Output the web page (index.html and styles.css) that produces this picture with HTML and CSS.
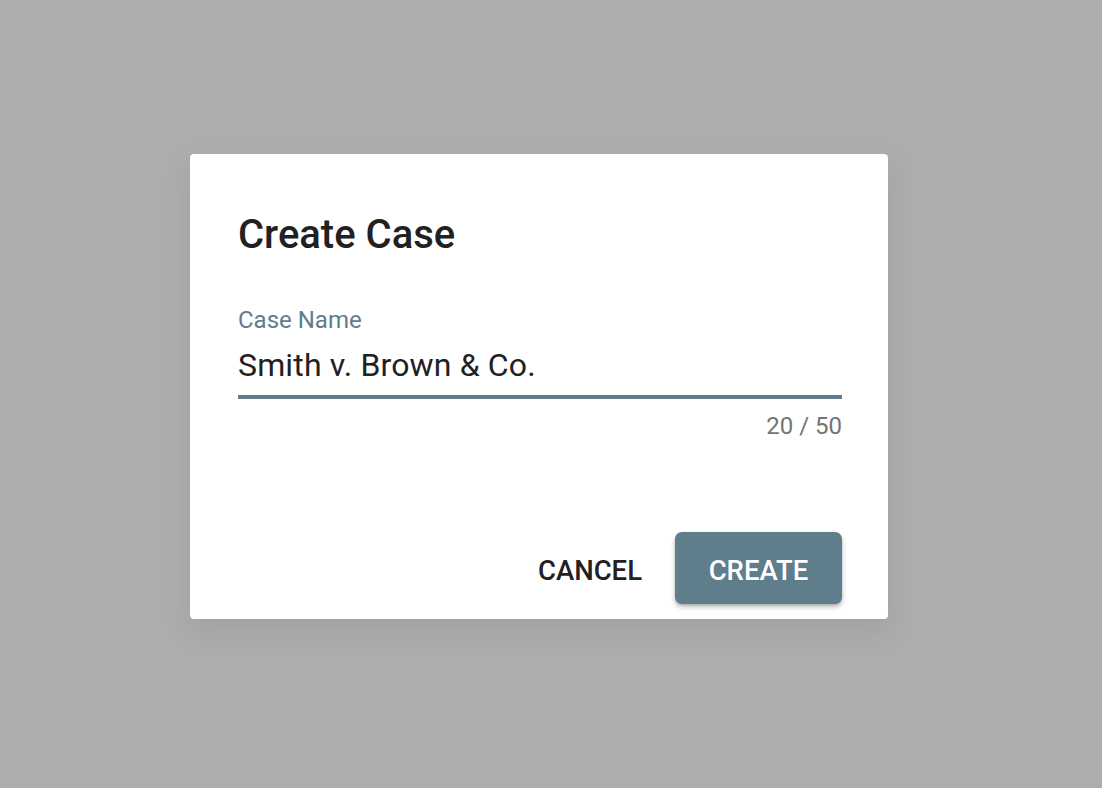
FILE: index.html
```html
<!doctype html>
<html lang="en">
  <head>
    <meta charset="UTF-8" />
    <title>Create Case</title>
    <link rel="stylesheet" href="styles.css">
  </head>
  <body>
    <div class="dialog">
      <h2 class="dialog-title">Create Case</h2>

      <div class="field">
        <label class="field-label" for="case-name">Case Name</label>
        <div class="field-input">
          <input id="case-name" type="text" value="Smith v. Brown &amp; Co." maxlength="50" />
        </div>
        <div class="field-counter">20 / 50</div>
      </div>

      <div class="dialog-actions">
        <button class="btn btn-text">Cancel</button>
        <button class="btn btn-primary">Create</button>
      </div>
    </div>
  </body>
</html>
```

FILE: styles.css
```css
body {
  margin: 0;
  min-height: 100vh;
  background: #adadad;
  font-family: Roboto, 'Liberation Sans', sans-serif;
}

.dialog {
  width: 698px;
  box-sizing: border-box;
  margin: 154px 0 0 190px;
  padding: 57px 46px 15px 48px;
  background: #fff;
  border-radius: 4px;
  box-shadow: 0 11px 30px rgba(0, 0, 0, 0.08);
  display: flex;
  flex-direction: column;
}

.dialog-title {
  margin: 0;
  font-size: 40px;
  line-height: 48px;
  font-weight: 500;
  color: #212121;
}

.field {
  margin-top: 47px;
  display: flex;
  flex-direction: column;
}

.field-label {
  font-size: 24px;
  line-height: 28px;
  color: #607d8b;
}

.field-input {
  margin-top: 11px;
  padding-bottom: 10px;
  border-bottom: 4px solid #607d8b;
}

.field-input input {
  display: block;
  width: 100%;
  border: 0;
  padding: 0;
  margin: 0;
  outline: none;
  background: transparent;
  font-family: inherit;
  font-size: 32px;
  letter-spacing: 0.15px;
  line-height: 40px;
  height: 40px;
  color: #212121;
}

.field-counter {
  margin-top: 13px;
  text-align: right;
  font-size: 24px;
  line-height: 28px;
  color: #757575;
}

.dialog-actions {
  margin-top: 92px;
  display: flex;
  justify-content: flex-end;
  gap: 17px;
}

.btn {
  height: 72px;
  border: 0;
  border-radius: 7px;
  font-family: inherit;
  font-size: 27.5px;
  font-weight: 500;
  text-transform: uppercase;
  padding: 4px 0 0;
  cursor: pointer;
}

.btn-text {
  background: transparent;
  color: #212121;
  padding-left: 16px;
  padding-right: 16px;
}

.btn-primary {
  width: 167px;
  background: #607d8b;
  color: #fff;
  box-shadow: 0 3px 5px rgba(0, 0, 0, 0.25), 0 1px 2px rgba(0, 0, 0, 0.15);
}
```
